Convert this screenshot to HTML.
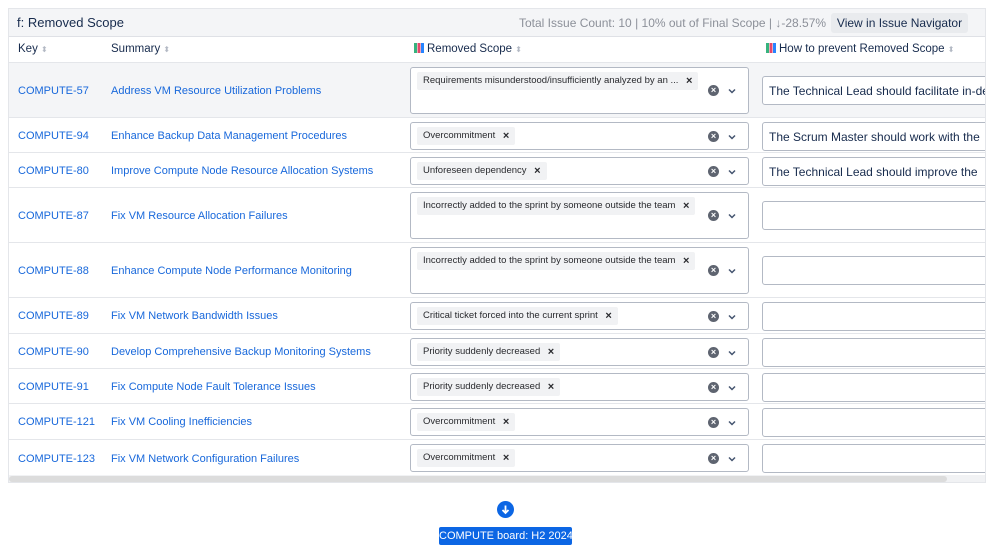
<!DOCTYPE html>
<html><head><meta charset="utf-8"><style>
*{box-sizing:border-box;margin:0;padding:0}
body{width:999px;height:551px;background:#fff;font-family:"Liberation Sans",sans-serif;position:relative;overflow:hidden;color:#172b4d}
.wrap{position:absolute;left:8px;top:8px;width:978px;height:475px;border:1px solid #e4e6ea;overflow:hidden}
.hdr{position:absolute;left:0;top:0;width:978px;height:28px;background:#f4f5f7;border-bottom:1px solid #dfe1e6}
.hdr .t{position:absolute;left:8px;top:6px;font-size:13px;color:#172b4d}
.hdr .s{position:absolute;left:510px;top:7px;font-size:12px;color:#8c9099}
.btn{position:absolute;left:822px;top:4px;width:137px;height:20px;background:#e9ebee;border-radius:3px;font-size:12px;text-align:center;line-height:20px;color:#172b4d}
.ch{position:absolute;top:28px;height:26px;font-size:11.5px;line-height:24px;color:#172b4d}
.ch i{font-style:normal;color:#b3b9c4;font-size:8px}
.row{position:absolute;left:0;width:978px;border-top:1px solid #e4e6ea}
.k,.su{position:absolute;font-size:11px;color:#1868db;white-space:nowrap;margin-top:2px}
.k{left:9px}.su{left:102px}
.sel{position:absolute;left:401px;width:339px;border:1px solid #b3b9c4;border-radius:3px;background:#fff}
.tag{position:absolute;left:6px;top:4px;height:18px;background:#f1f2f4;border-radius:2px;font-size:9.5px;line-height:18px;padding:0 20px 0 6px;color:#292a2e;white-space:nowrap}
.tag:after{content:"×";position:absolute;right:6px;top:0;font-weight:bold;font-size:11px}
.clr{position:absolute;right:29px;width:11px;height:11px;border-radius:50%;background:#5e6470;color:#fff;font-size:9px;line-height:11px;text-align:center;font-weight:bold}
.chev{position:absolute;right:12px;width:8px;height:8px}
.ta{position:absolute;left:753px;width:240px;height:29px;border:1px solid #b3b9c4;border-radius:3px;background:#fff;font-size:12px;padding:5px 6px;overflow:hidden;white-space:nowrap;color:#172b4d;line-height:18px}
.sb{position:absolute;left:0;top:466px;width:978px;height:8px;background:#f1f2f4}
.sb div{position:absolute;left:0;top:1px;width:938px;height:6px;background:#dcdcdc;border-radius:3px}
.ic{display:inline-block;width:10px;height:10px;vertical-align:-1px;margin-right:3px;background:linear-gradient(90deg,#36b37e 0 30%,#fff 30% 35%,#e5486b 35% 65%,#fff 65% 70%,#2684ff 70%)}
</style></head><body>
<div class="wrap">
<div class="hdr"><div class="t">f: Removed Scope</div><div class="s">Total Issue Count: 10 | 10% out of Final Scope | ↓-28.57%</div><div class="btn">View in Issue Navigator</div></div>
<div class="ch" style="left:9px">Key <i>⬍</i></div>
<div class="ch" style="left:102px">Summary <i>⬍</i></div>
<div class="ch" style="left:405px"><span class="ic"></span>Removed Scope <i>⬍</i></div>
<div class="ch" style="left:757px"><span class="ic"></span>How to prevent Removed Scope <i>⬍</i></div>

<div class="row" style="top:53px;height:55px;background:#f4f5f7">
<div class="k" style="top:20px">COMPUTE-57</div><div class="su" style="top:20px">Address VM Resource Utilization Problems</div>
<div class="sel" style="top:4px;height:47px"><div class="tag">Requirements misunderstood/insufficiently analyzed by an ...</div><div class="clr" style="top:17px">×</div><svg class="chev" style="top:19px" viewBox="0 0 8 8"><path d="M1 2.5L4 5.5L7 2.5" fill="none" stroke="#44546f" stroke-width="1.5"/></svg></div>
<div class="ta" style="top:13px">The Technical Lead should facilitate in-depth</div></div>

<div class="row" style="top:108px;height:35px">
<div class="k" style="top:10px">COMPUTE-94</div><div class="su" style="top:10px">Enhance Backup Data Management Procedures</div>
<div class="sel" style="top:4px;height:28px"><div class="tag">Overcommitment</div><div class="clr" style="top:8px">×</div><svg class="chev" style="top:10px" viewBox="0 0 8 8"><path d="M1 2.5L4 5.5L7 2.5" fill="none" stroke="#44546f" stroke-width="1.5"/></svg></div>
<div class="ta" style="top:4px">The Scrum Master should work with the</div></div>

<div class="row" style="top:143px;height:35px">
<div class="k" style="top:10px">COMPUTE-80</div><div class="su" style="top:10px">Improve Compute Node Resource Allocation Systems</div>
<div class="sel" style="top:4px;height:28px"><div class="tag">Unforeseen dependency</div><div class="clr" style="top:8px">×</div><svg class="chev" style="top:10px" viewBox="0 0 8 8"><path d="M1 2.5L4 5.5L7 2.5" fill="none" stroke="#44546f" stroke-width="1.5"/></svg></div>
<div class="ta" style="top:4px">The Technical Lead should improve the</div></div>

<div class="row" style="top:178px;height:55px">
<div class="k" style="top:20px">COMPUTE-87</div><div class="su" style="top:20px">Fix VM Resource Allocation Failures</div>
<div class="sel" style="top:4px;height:47px"><div class="tag">Incorrectly added to the sprint by someone outside the team</div><div class="clr" style="top:17px">×</div><svg class="chev" style="top:19px" viewBox="0 0 8 8"><path d="M1 2.5L4 5.5L7 2.5" fill="none" stroke="#44546f" stroke-width="1.5"/></svg></div>
<div class="ta" style="top:13px"></div></div>

<div class="row" style="top:233px;height:55px">
<div class="k" style="top:20px">COMPUTE-88</div><div class="su" style="top:20px">Enhance Compute Node Performance Monitoring</div>
<div class="sel" style="top:4px;height:47px"><div class="tag">Incorrectly added to the sprint by someone outside the team</div><div class="clr" style="top:17px">×</div><svg class="chev" style="top:19px" viewBox="0 0 8 8"><path d="M1 2.5L4 5.5L7 2.5" fill="none" stroke="#44546f" stroke-width="1.5"/></svg></div>
<div class="ta" style="top:13px"></div></div>

<div class="row" style="top:288px;height:36px">
<div class="k" style="top:10px">COMPUTE-89</div><div class="su" style="top:10px">Fix VM Network Bandwidth Issues</div>
<div class="sel" style="top:4px;height:28px"><div class="tag">Critical ticket forced into the current sprint</div><div class="clr" style="top:8px">×</div><svg class="chev" style="top:10px" viewBox="0 0 8 8"><path d="M1 2.5L4 5.5L7 2.5" fill="none" stroke="#44546f" stroke-width="1.5"/></svg></div>
<div class="ta" style="top:4px"></div></div>

<div class="row" style="top:324px;height:35px">
<div class="k" style="top:10px">COMPUTE-90</div><div class="su" style="top:10px">Develop Comprehensive Backup Monitoring Systems</div>
<div class="sel" style="top:4px;height:28px"><div class="tag">Priority suddenly decreased</div><div class="clr" style="top:8px">×</div><svg class="chev" style="top:10px" viewBox="0 0 8 8"><path d="M1 2.5L4 5.5L7 2.5" fill="none" stroke="#44546f" stroke-width="1.5"/></svg></div>
<div class="ta" style="top:4px"></div></div>

<div class="row" style="top:359px;height:35px">
<div class="k" style="top:10px">COMPUTE-91</div><div class="su" style="top:10px">Fix Compute Node Fault Tolerance Issues</div>
<div class="sel" style="top:4px;height:28px"><div class="tag">Priority suddenly decreased</div><div class="clr" style="top:8px">×</div><svg class="chev" style="top:10px" viewBox="0 0 8 8"><path d="M1 2.5L4 5.5L7 2.5" fill="none" stroke="#44546f" stroke-width="1.5"/></svg></div>
<div class="ta" style="top:4px"></div></div>

<div class="row" style="top:394px;height:36px">
<div class="k" style="top:10px">COMPUTE-121</div><div class="su" style="top:10px">Fix VM Cooling Inefficiencies</div>
<div class="sel" style="top:4px;height:28px"><div class="tag">Overcommitment</div><div class="clr" style="top:8px">×</div><svg class="chev" style="top:10px" viewBox="0 0 8 8"><path d="M1 2.5L4 5.5L7 2.5" fill="none" stroke="#44546f" stroke-width="1.5"/></svg></div>
<div class="ta" style="top:4px"></div></div>

<div class="row" style="top:430px;height:36px">
<div class="k" style="top:11px">COMPUTE-123</div><div class="su" style="top:11px">Fix VM Network Configuration Failures</div>
<div class="sel" style="top:4px;height:28px"><div class="tag">Overcommitment</div><div class="clr" style="top:8px">×</div><svg class="chev" style="top:10px" viewBox="0 0 8 8"><path d="M1 2.5L4 5.5L7 2.5" fill="none" stroke="#44546f" stroke-width="1.5"/></svg></div>
<div class="ta" style="top:4px"></div></div>

<div class="sb"><div></div></div>
</div>
<svg style="position:absolute;left:497px;top:501px" width="17" height="17" viewBox="0 0 17 17"><circle cx="8.5" cy="8.5" r="8.5" fill="#0c66e4"/><path d="M8.5 4.5V12M5.5 9L8.5 12L11.5 9" fill="none" stroke="#fff" stroke-width="1.8"/></svg>
<div style="position:absolute;left:439px;top:527px;width:133px;height:18px;background:#0c66e4;color:#fff;font-size:11px;line-height:18px;text-align:center;border-radius:2px;white-space:nowrap;overflow:hidden">COMPUTE board: H2 2024</div>
</body></html>
